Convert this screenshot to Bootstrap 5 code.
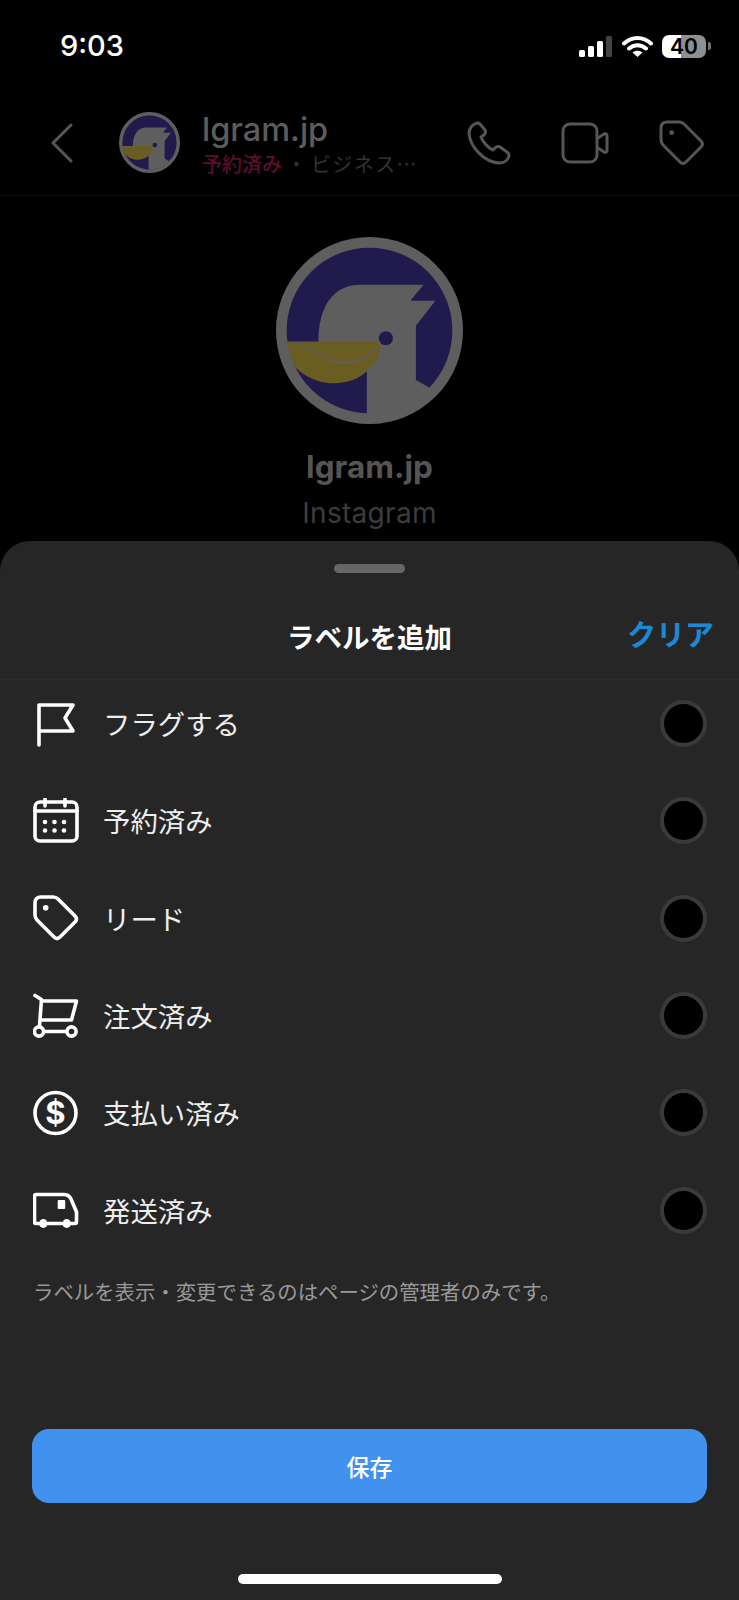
<!DOCTYPE html>
<html lang="ja">
  <head>
    <meta charset="UTF-8" />
    <meta name="viewport" content="width=device-width, initial-scale=1.0" />
    <title>ラベルを追加</title>
    <link href="https://cdn.jsdelivr.net/npm/bootstrap@5.3.2/dist/css/bootstrap.min.css" rel="stylesheet" />
    <style>
      body { background: #000; font-family: Inter, "Noto Sans CJK JP", sans-serif; }
      .screen { width: 739px; height: 1600px; overflow: hidden; }
      .behind { height: 541px; }

      /* status bar */
      .status-bar { height: 90px; padding: 2px 28px 0 60px; color: #fff; }
      .clock { font-size: 29px; font-weight: 500; }
      .signal { height: 21px; gap: 2.5px; margin-right: 10px; }
      .signal i { width: 6.5px; background: #fff; border-radius: 1.5px; }
      .signal i:nth-child(1) { height: 7px; }
      .signal i:nth-child(2) { height: 11px; }
      .signal i:nth-child(3) { height: 16px; }
      .signal i:nth-child(4) { height: 21px; background: #444; }
      .battery {
        width: 44px; height: 23px; margin-left: 9px; border-radius: 7px;
        background: linear-gradient(90deg, #fff 43%, #8f8f8f 43%);
        color: #000; font-size: 21px; font-weight: 600; line-height: 23px; text-align: center;
      }
      .battery-tip { width: 3px; height: 8px; margin-left: 2px; background: #6f6f6f; border-radius: 0 2px 2px 0; }

      /* dimmed chat header */
      .chat-bar { height: 106px; padding: 0 34px 0 51px; border-bottom: 1px solid #0e0e0e; }
      .chat-avatar { width: 61px; height: 61px; margin-left: 46px; }
      .chat-text { margin: 4px 0 0 22px; width: 240px; }
      .chat-name { font-size: 32.5px; font-weight: 500; line-height: 36px; color: #5c5c5c; }
      .chat-sub { font-size: 20px; line-height: 26px; margin-top: 3px; color: #333; font-family: "Noto Sans CJK JP", sans-serif; }
      .chat-sub b { font-weight: 500; color: #5e0e30; }
      .chat-more { letter-spacing: 1.4px; }
      .chat-icons { gap: 50px; }

      .profile-pic { width: 187px; height: 187px; margin-top: 41px; }
      .profile-name { font-size: 31.5px; font-weight: 700; line-height: 40px; margin-top: 23px; color: #555; }
      .profile-sub { font-size: 28px; line-height: 34px; margin-top: 9px; color: #3c3c3c; letter-spacing: .3px; }

      /* sheet */
      .sheet { height: 1059px; background: #262626; border-radius: 30px 30px 0 0; }
      .grabber { width: 71px; height: 9px; margin: 23px auto 0; background: #666; border-radius: 5px; }
      .sheet-head { height: 107px; border-bottom: 1px solid #2d2d2d; padding-top: 21px; }
      .sheet-title { font-size: 27.5px; font-weight: 700; color: #fff; font-family: "Noto Sans CJK JP", sans-serif; }
      .sheet-clear { right: 25px; top: 50%; transform: translateY(calc(-50% + 8px)); font-size: 29px; font-weight: 700; color: #1b8ad6; font-family: "Noto Sans CJK JP", sans-serif; }
      .label-list { margin-top: -5px; }
      .label-row { height: 97.3px; padding: 0 32px 0 33px; }
      .label-row svg { flex: none; }
      .label-name { margin-left: 24px; font-size: 27.4px; color: #eee; font-family: "Noto Sans CJK JP", sans-serif; font-weight: 400; }
      .pick { width: 47px; height: 47px; background: #000; border: 4px solid #3a3a3a; border-radius: 50%; }
      .sheet-note { margin: 16px 0 0 33px; font-size: 20.4px; line-height: 32px; color: #999; font-family: "Noto Sans CJK JP", sans-serif; font-weight: 400; }
      .save-btn {
        height: 74px; margin: 0 32px; background: #4192ef; border: 0; border-radius: 17px;
        color: #fff; font-size: 23px; font-weight: 500; font-family: "Noto Sans CJK JP", sans-serif;
      }
      .home-bar { width: 264px; height: 10px; margin: 71px auto 16px; background: #fff; border-radius: 5px; }
      .ico { fill: none; stroke: #fff; stroke-width: 3.6; stroke-linecap: round; stroke-linejoin: round; }
      .ico-dim { fill: none; stroke: #565656; stroke-width: 3; stroke-linecap: round; stroke-linejoin: round; }
      .dollar-sign { font-family: Inter, sans-serif; font-size: 31px; font-weight: 700; fill: #fff; text-anchor: middle; }
    </style>
  </head>
  <body>
    <svg width="0" height="0" class="d-block">
      <defs>
        <clipPath id="logo-disc"><circle cx="358" cy="332" r="250" /></clipPath>
        <symbol id="logo" viewBox="78 52 560 560">
          <circle cx="358" cy="332" r="250" fill="#211b4d" />
          <g clip-path="url(#logo-disc)">
            <path fill="#5e5e5e" d="M205 365C205 260 250 195 330 195H520L480 243H555L497 318V480L540 505L640 640H350V440H205Z" />
            <path fill="#6a5d22" d="M100 365H396C385 430 340 490 250 490C190 490 110 450 100 365Z" />
            <path fill="none" stroke="#5e5e5e" stroke-width="5" d="M125 368C180 365 220 430 280 428C330 428 370 400 395 362" />
            <circle cx="407" cy="355" r="21" fill="#211b4d" />
          </g>
          <circle cx="358" cy="332" r="264" fill="none" stroke="#5e5e5e" stroke-width="32" />
        </symbol>
        <symbol id="tag-shape" viewBox="0 0 46 46">
          <path d="M2 8Q2 2 8 2H20Q23 2 25 4L42 21Q45 24 42 27L27 42Q24 45 21 42L4 25Q2 23 2 20Z" />
        </symbol>
      </defs>
    </svg>

    <div class="screen d-flex flex-column">
      <div class="behind flex-shrink-0">
        <div class="status-bar d-flex align-items-center">
          <span class="clock">9:03</span>
          <div class="ms-auto d-flex align-items-center">
            <div class="signal d-flex align-items-end"><i></i><i></i><i></i><i></i></div>
            <svg width="31" height="23" viewBox="0 0 31 23">
              <path d="M2 8.5C10 1 21 1 29 8.5M7 13.5C12 9 19 9 24 13.5" fill="none" stroke="#fff" stroke-width="4" stroke-linecap="round" />
              <path d="M15.5 22L10.5 17.5C13.5 15 17.5 15 20.5 17.5Z" fill="#fff" />
            </svg>
            <div class="battery">40</div>
            <div class="battery-tip"></div>
          </div>
        </div>

        <div class="chat-bar d-flex align-items-center">
          <svg width="22" height="40" viewBox="0 0 22 40" class="ico-dim"><path d="M20 2L2 20L20 38" /></svg>
          <svg class="chat-avatar"><use href="#logo" /></svg>
          <div class="chat-text">
            <div class="chat-name">lgram.jp</div>
            <div class="chat-sub text-nowrap"><b>予約済み</b> ・ <span class="chat-more">ビジネス…</span></div>
          </div>
          <div class="ms-auto d-flex align-items-center chat-icons">
            <svg width="44" height="44" viewBox="0 0 44 44" class="ico-dim">
              <path d="M10 2C6 3 2 7 2 12C3 26 17 41 32 42C37 42 41 39 42 35C42 33 42 32 40 31L33 26C31 25 30 25 28 27L26 29C21 27 16 21 14 16L17 14C19 12 19 11 18 9L13 3C12 2 11 2 10 2Z" />
            </svg>
            <svg width="48" height="42" viewBox="0 0 48 42" class="ico-dim">
              <rect x="2" y="2" width="34" height="38" rx="7" />
              <path d="M37 16L43 12Q46 11 46 14V28Q46 31 43 30L37 26" />
            </svg>
            <svg width="46" height="46" viewBox="0 0 46 46" class="ico-dim">
              <use href="#tag-shape" />
              <circle cx="12.7" cy="12.7" r="2.4" fill="#565656" stroke="none" />
            </svg>
          </div>
        </div>

        <div class="d-flex flex-column align-items-center">
          <svg class="profile-pic"><use href="#logo" /></svg>
          <div class="profile-name">lgram.jp</div>
          <div class="profile-sub">Instagram</div>
        </div>
      </div>

      <div class="sheet d-flex flex-column flex-grow-1">
        <div class="grabber flex-shrink-0"></div>
        <div class="sheet-head position-relative d-flex align-items-center justify-content-center flex-shrink-0">
          <span class="sheet-title">ラベルを追加</span>
          <span class="sheet-clear position-absolute">クリア</span>
        </div>

        <div class="label-list">
          <div class="label-row d-flex align-items-center">
            <svg width="46" height="46" viewBox="0 0 46 46" class="ico"><path d="M6 44V4H40L32 17L40 30H6" /></svg>
            <span class="label-name">フラグする</span>
            <span class="pick ms-auto"></span>
          </div>
          <div class="label-row d-flex align-items-center">
            <svg width="46" height="46" viewBox="0 0 46 46" class="ico">
              <rect x="2" y="4" width="42" height="39" rx="5" />
              <path d="M2 13H44M12 1V8M32 1V8" />
              <g fill="#fff" stroke="none">
                <circle cx="12" cy="24" r="2.3" /><circle cx="21.5" cy="24" r="2.3" /><circle cx="31" cy="24" r="2.3" />
                <circle cx="12" cy="32.5" r="2.3" /><circle cx="21.5" cy="32.5" r="2.3" /><circle cx="31" cy="32.5" r="2.3" />
              </g>
            </svg>
            <span class="label-name">予約済み</span>
            <span class="pick ms-auto"></span>
          </div>
          <div class="label-row d-flex align-items-center">
            <svg width="46" height="46" viewBox="0 0 46 46" class="ico">
              <use href="#tag-shape" />
              <circle cx="12.7" cy="12.7" r="2.8" fill="#fff" stroke="none" />
            </svg>
            <span class="label-name">リード</span>
            <span class="pick ms-auto"></span>
          </div>
          <div class="label-row d-flex align-items-center">
            <svg width="46" height="46" viewBox="0 0 46 46" class="ico">
              <path d="M2 2.5L8.5 6.5L6.5 33M8.5 8H43.5L38.5 27H8M11 38.5H33.5" />
              <circle cx="6" cy="38.5" r="4.6" /><circle cx="38.5" cy="38.5" r="4.6" />
            </svg>
            <span class="label-name">注文済み</span>
            <span class="pick ms-auto"></span>
          </div>
          <div class="label-row d-flex align-items-center">
            <svg width="46" height="46" viewBox="0 0 46 46" class="ico">
              <circle cx="22.5" cy="23" r="20.5" />
              <text x="22.5" y="34" class="dollar-sign" stroke="none">$</text>
            </svg>
            <span class="label-name">支払い済み</span>
            <span class="pick ms-auto"></span>
          </div>
          <div class="label-row d-flex align-items-center">
            <svg width="46" height="46" viewBox="0 0 46 46" class="ico">
              <path d="M6 36.5H3C2 36.5 1.5 36 1.5 35V9C1.5 8 2 7.5 3 7.5H31C35 7.5 37 10 38 12L43.5 25V35C43.5 36 43 36.5 42 36.5H38M15 36.5H29" />
              <circle cx="10.3" cy="36.5" r="4.4" fill="#fff" stroke="none" /><circle cx="33.7" cy="36.5" r="4.4" fill="#fff" stroke="none" />
              <rect x="24.7" y="13" width="7.5" height="9" rx="1" fill="#fff" stroke="none" />
            </svg>
            <span class="label-name">発送済み</span>
            <span class="pick ms-auto"></span>
          </div>
        </div>

        <div class="sheet-note">ラベルを表示・変更できるのはページの管理者のみです。</div>

        <button class="btn save-btn mt-auto flex-shrink-0">保存</button>
        <div class="home-bar flex-shrink-0"></div>
      </div>
    </div>

    <script src="https://cdn.jsdelivr.net/npm/bootstrap@5.3.2/dist/js/bootstrap.bundle.min.js"></script>
  </body>
</html>
